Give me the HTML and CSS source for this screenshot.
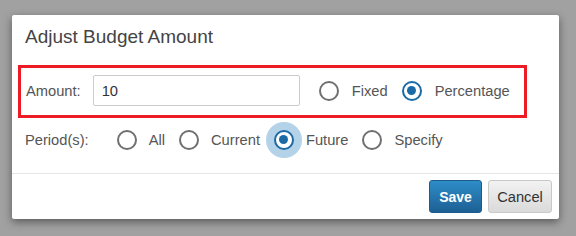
FILE: index.html
```html
<!DOCTYPE html>
<html lang="en">
<head>
  <meta charset="UTF-8" />
  <title>Adjust Budget Amount</title>
  <link rel="stylesheet" href="styles.css">
</head>
<body>

  <div class="dialog">
    <div class="dialog-header">
      <h3>Adjust Budget Amount</h3>
    </div>

    <div class="dialog-body">
      <div class="amount-row">
        <label class="field-label" for="amount">Amount:</label>
        <input type="text" id="amount" class="amount-input" value="10" />

        <span class="choice first">
          <input type="radio" name="kind" id="kindFixed" />
          <label for="kindFixed">Fixed</label>
        </span>
        <span class="choice">
          <input type="radio" name="kind" id="kindPct" checked />
          <label for="kindPct">Percentage</label>
        </span>
      </div>

      <div class="period-row">
        <span class="field-label period-label">Period(s):</span>
        <span class="choice">
          <input type="radio" name="period" id="pAll" />
          <label for="pAll">All</label>
        </span>
        <span class="choice">
          <input type="radio" name="period" id="pCurrent" />
          <label for="pCurrent">Current</label>
        </span>
        <span class="choice">
          <input type="radio" name="period" id="pFuture" class="focused" checked />
          <label for="pFuture">Future</label>
        </span>
        <span class="choice">
          <input type="radio" name="period" id="pSpecify" />
          <label for="pSpecify">Specify</label>
        </span>
      </div>
    </div>

    <div class="dialog-footer">
      <button class="btn btn-save">Save</button>
      <button class="btn btn-cancel">Cancel</button>
    </div>
  </div>

</body>
</html>
```

FILE: styles.css
```css
body {
  margin: 0;
  padding: 15px 0 0 12px;
  height: 236px;
  box-sizing: border-box;
  background: #a1a1a1;
  font-family: "Liberation Sans", Arial, sans-serif;
  font-size: 14.7px;
  color: #555;
}

.dialog {
  width: 547px;
  background: #fff;
  border-radius: 2px;
  box-shadow: 0 3px 9px rgba(0, 0, 0, 0.45);
}

.dialog-header {
  padding: 11px 13px 0;
}

.dialog-header h3 {
  margin: 0;
  font-size: 19px;
  line-height: 22px;
  font-weight: normal;
  color: #444;
}

.dialog-body {
  padding: 17px 6px 23px;
}

.amount-row {
  display: flex;
  align-items: center;
  width: fit-content;
  border: 3px solid #ed1c24;
  padding: 7px 14px 9px 5px;
}

.amount-input {
  width: 207px;
  height: 31px;
  box-sizing: border-box;
  margin-left: 12px;
  border: 1px solid #ccc;
  border-radius: 2px;
  padding: 0 8px;
  font-family: inherit;
  font-size: 14.7px;
  color: #333;
}

.choice {
  display: inline-flex;
  align-items: center;
  margin-left: 14px;
}

.choice.first {
  margin-left: 19px;
}

.choice label {
  margin-left: 13px;
}

.period-row .choice label {
  margin-left: 12px;
}

.choice input[type="radio"] {
  appearance: none;
  -webkit-appearance: none;
  margin: 0;
  width: 20px;
  height: 20px;
  box-sizing: border-box;
  border: 2px solid #707070;
  border-radius: 50%;
  background: #fff;
  position: relative;
}

.choice input[type="radio"]:checked {
  border: 2.5px solid #1a6aa6;
}

.choice input[type="radio"]:checked::after {
  content: "";
  position: absolute;
  left: 3px;
  top: 3px;
  width: 9px;
  height: 9px;
  border-radius: 50%;
  background: #1a6aa6;
}

.choice input.focused {
  box-shadow: 0 0 0 8px #b4d3e8;
}

.period-row {
  display: flex;
  align-items: center;
  margin-top: 12px;
  padding-left: 7px;
  height: 20px;
}

.period-label {
  margin-right: 14px;
}

.dialog-footer {
  display: flex;
  justify-content: flex-end;
  gap: 6px;
  border-top: 1px solid #e5e5e5;
  padding: 6px 7px;
}

.btn {
  height: 33px;
  border-radius: 3px;
  font-family: inherit;
  font-size: 14.7px;
  cursor: pointer;
}

.btn-save {
  width: 53px;
  color: #fff;
  font-weight: bold;
  font-size: 14px;
  border: 1px solid #1d5c8a;
  background: linear-gradient(#2e8dc7, #1d6095);
}

.btn-cancel {
  width: 64px;
  color: #333;
  border: 1px solid #c8c8c8;
  background: linear-gradient(#f2f2f2, #dadada);
}
```
